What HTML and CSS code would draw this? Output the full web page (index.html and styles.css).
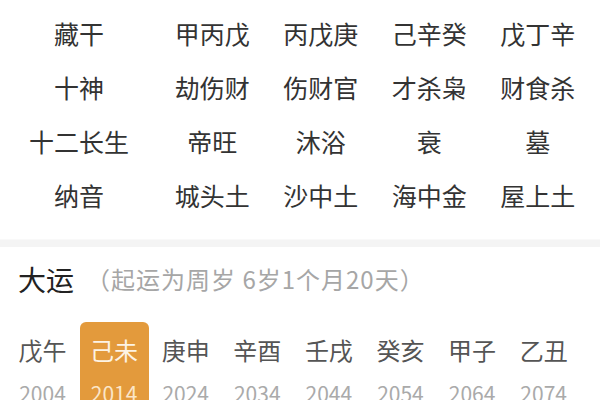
FILE: index.html
```html
<!DOCTYPE html>
<html lang="zh">
<head>
<meta charset="utf-8">
<link rel="stylesheet" href="styles.css">
</head>
<body>
<div class="table">
  <div class="cell label">藏干</div><div class="cell">甲丙戊</div><div class="cell">丙戊庚</div><div class="cell">己辛癸</div><div class="cell">戊丁辛</div>
  <div class="cell label">十神</div><div class="cell">劫伤财</div><div class="cell">伤财官</div><div class="cell">才杀枭</div><div class="cell">财食杀</div>
  <div class="cell label">十二长生</div><div class="cell">帝旺</div><div class="cell">沐浴</div><div class="cell">衰</div><div class="cell">墓</div>
  <div class="cell label">纳音</div><div class="cell">城头土</div><div class="cell">沙中土</div><div class="cell">海中金</div><div class="cell">屋上土</div>
</div>
<div class="sep"></div>
<section class="dayun">
  <div class="head"><span class="title">大运</span><span class="sub">（起运为周岁 6岁1个月20天）</span></div>
  <div class="list">
    <div class="item"><span class="gz">戊午</span><span class="yr">2004</span></div>
    <div class="item active"><span class="gz">己未</span><span class="yr">2014</span></div>
    <div class="item"><span class="gz">庚申</span><span class="yr">2024</span></div>
    <div class="item"><span class="gz">辛酉</span><span class="yr">2034</span></div>
    <div class="item"><span class="gz">壬戌</span><span class="yr">2044</span></div>
    <div class="item"><span class="gz">癸亥</span><span class="yr">2054</span></div>
    <div class="item"><span class="gz">甲子</span><span class="yr">2064</span></div>
    <div class="item"><span class="gz">乙丑</span><span class="yr">2074</span></div>
  </div>
</section>
</body>
</html>
```
FILE: styles.css
```css
html, body {
  margin: 0;
  padding: 0;
  background: #fff;
  font-family: "Noto Sans CJK SC", "Noto Sans", sans-serif;
  overflow: hidden;
  width: 600px;
  height: 400px;
}
.table {
  display: grid;
  grid-template-columns: 158px repeat(4, 108.5px);
  grid-auto-rows: 54px;
  padding-top: 6px;
  padding-bottom: 17px;
}
.cell {
  display: flex;
  align-items: center;
  justify-content: center;
  font-size: 25px;
  color: #333;
  line-height: 1;
}
.sep {
  height: 7px;
  background: #f4f4f4;
  border-top: 1px solid #f9f9f9;
}
.dayun {
  padding: 14px 0 0 0;
}
.head {
  display: flex;
  align-items: center;
  padding-left: 18px;
  height: 36px;
}
.title {
  font-size: 28px;
  color: #222;
  line-height: 1;
}
.sub {
  font-size: 24px;
  letter-spacing: 1px;
  color: #a6a6a6;
  margin-left: 12px;
  line-height: 1;
}
.list {
  display: flex;
  gap: 2.6px;
  padding-left: 8px;
  margin-top: 25px;
}
.item {
  width: 69px;
  height: 90px;
  display: flex;
  flex-direction: column;
  align-items: center;
  border-radius: 6px 6px 0 0;
}
.item.active {
  background: #e39a3c;
}
.gz {
  margin-top: 16px;
  font-size: 24px;
  color: #555;
  line-height: 1;
}
.yr {
  margin-top: 21px;
  font-size: 21px;
  color: #aaa;
  line-height: 1;
}
.active .gz { color: #fdf3e4; }
.active .yr { color: #fbe6c8; }
```
